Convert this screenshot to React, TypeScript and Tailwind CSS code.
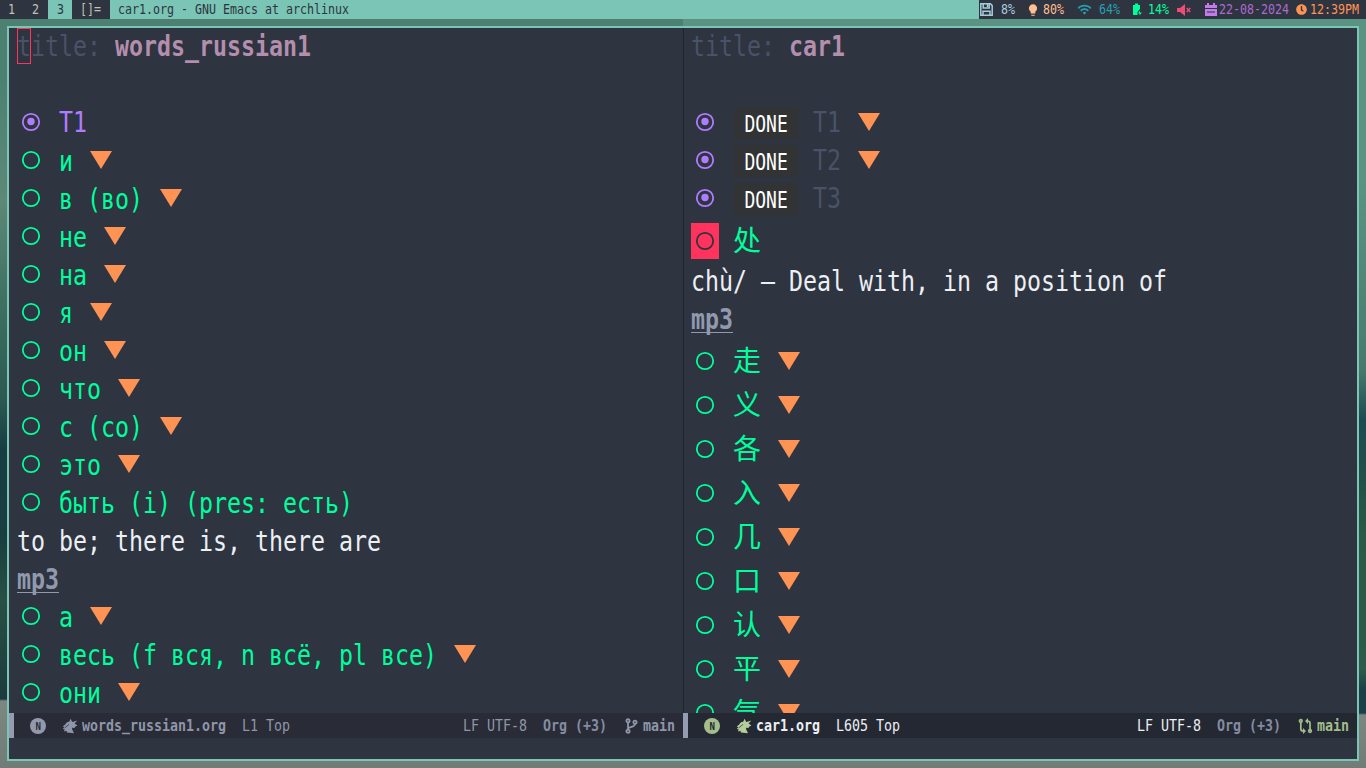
import React from "react";
import { FaClock } from "react-icons/fa";
import { MdLightbulb, MdWifi } from "react-icons/md";

type Size = "lg" | "md" | "sm";
const CELL: Record<Size, number> = { lg: 14, md: 8, sm: 7 };
const FONT: Record<Size, string> = {
  lg: "text-[28px]",
  md: "text-[16px]",
  sm: "text-[14px] pb-[2px]",
};

function Mono({ children, size = "lg", className = "" }: { children: string; size?: Size; className?: string }) {
  return (
    <span className={`block shrink-0 ${className}`} style={{ width: children.length * CELL[size] }}>
      <span className={`block w-max origin-left scale-x-[0.8306] whitespace-pre leading-none ${FONT[size]}`}>{children}</span>
    </span>
  );
}

function Bullet({ filled = false, className = "" }: { filled?: boolean; className?: string }) {
  return (
    <svg viewBox="0 0 28 20" className={`h-5 w-7 shrink-0 ${className}`} fill="none" stroke="currentColor" strokeWidth="1.8">
      <circle cx="14" cy="10" r="8.2" />
      {filled && <circle cx="14" cy="9.5" r="3.7" fill="currentColor" stroke="none" />}
    </svg>
  );
}

function Fold({ className = "" }: { className?: string }) {
  return (
    <svg viewBox="0 0 22 18" className={`ml-[17px] h-[18px] w-[22px] shrink-0 fill-[#ff9353] ${className}`}>
      <path d="M0 0H22L11 18Z" />
    </svg>
  );
}

function Row({ text, fold = true }: { text: string; fold?: boolean }) {
  return (
    <div className="flex h-[38px] shrink-0 items-center text-[#00ff9c]">
      <Bullet />
      <Mono className="ml-[14px] pt-[3px]">{text}</Mono>
      {fold && <Fold />}
    </div>
  );
}

function Done({ text, fold = false }: { text: string; fold?: boolean }) {
  return (
    <div className="flex h-[38px] shrink-0 items-center">
      <Bullet filled className="text-[#b07cff]" />
      <span className="ml-[15px] mt-[2px] flex h-8 w-16 items-center justify-center bg-[#323334] pt-[2px] text-white">
        <span className="-mx-4 block origin-center scale-x-[0.8] text-[22.5px] leading-none">DONE</span>
      </span>
      <Mono className="ml-[15px] pt-[2px] text-[#4a5267]">{text}</Mono>
      {fold && <Fold />}
    </div>
  );
}

function Han({ text }: { text: string }) {
  return (
    <div className="flex h-11 shrink-0 items-center text-[#00ff9c]">
      <Bullet className="mt-[4px]" />
      <span className="ml-[14px] w-7 font-['Noto_Sans_CJK_SC',sans-serif] text-[28px] leading-none">{text}</span>
      <Fold className="mt-[4px]" />
    </div>
  );
}

function Link({ text }: { text: string }) {
  return (
    <div className="flex h-[38px] shrink-0 items-center font-bold text-[#9099ae]">
      <Mono className="pt-[4px] underline decoration-1 underline-offset-[3px] [text-decoration-skip-ink:none]">{text}</Mono>
    </div>
  );
}

function Unicorn() {
  return (
    <svg viewBox="0 0 16 16" className="h-4 w-4 shrink-0 fill-current">
      <path d="M15.2 2.6 10.6 4 9.8 3.2 8.6.8 7.2 3.8C5 4 3.8 5.2 3 6.8L.6 8.6 2.4 9 .8 11 2.6 11.2 2 13.4 4.6 12.8 4.8 14.4 12 15.2 10.2 11.6 10 9.8 12.4 10 13.4 8.6 15.4 7.4 12.6 5.4Z" />
      <path d="M2.6 10 7 6.4" stroke="#292c36" strokeWidth=".7" />
    </svg>
  );
}

function Branch() {
  return (
    <svg viewBox="0 0 13 16" className="h-4 w-[13px] shrink-0" fill="none" stroke="currentColor" strokeWidth="1.8">
      <circle cx="3" cy="2.8" r="1.6" /><circle cx="3" cy="13.2" r="1.6" /><circle cx="10" cy="4.2" r="1.6" />
      <path d="M3 4.5v7M3 10.5c1-2 7-1 7-4.8" />
    </svg>
  );
}

function Compare() {
  return (
    <svg viewBox="0 0 15 16" className="h-4 w-[15px] shrink-0" fill="none" stroke="currentColor" strokeWidth="1.7">
      <circle cx="2.8" cy="3" r="1.3" /><circle cx="12" cy="13" r="1.3" />
      <path d="M2.8 4.5V11q0 2 2.7 2M12 11.5V5q0-2-2.7-2" />
      <path d="m5 10 3 3-3 3ZM10 0 7 3l3 3Z" fill="currentColor" stroke="none" />
    </svg>
  );
}

function ModeLine({ active, file, pos }: { active: boolean; file: string; pos: string }) {
  return (
    <div className={`flex h-[25px] shrink-0 items-center pr-2 ${active ? "bg-[#242832] text-[#eceff4]" : "bg-[#292c36] text-[#8f96aa]"}`}>
      <span className="h-full w-[5px] shrink-0 bg-[#959cb2]" />
      <span className={`ml-4 mt-px flex size-4 shrink-0 items-center justify-center rounded-full text-[11px] font-bold leading-none ${active ? "bg-[#a3be8c] text-[#242832]" : "bg-[#9299ae] text-[#292c36]"}`}>
        <span className="block scale-x-[0.83]">N</span>
      </span>
      <span className={`ml-4 mt-px flex ${active ? "text-[#b3cd9b]" : "text-[#8f96aa]"}`}><Unicorn /></span>
      <Mono size="md" className="ml-[4px] font-bold">{file}</Mono>
      <Mono size="md" className="ml-4">{pos}</Mono>
      <span className="grow" />
      <Mono size="md">LF UTF-8</Mono>
      <Mono size="md" className="ml-4 font-bold text-[#858ca2]">Org (+3)</Mono>
      <span className={`ml-[18px] flex items-center gap-[5px] ${active ? "text-[#a3be8c]" : "text-[#8f96aa]"}`}>
        {active ? <span className="-mx-px flex"><Compare /></span> : <Branch />}
        <Mono size="md" className="font-bold">main</Mono>
      </span>
    </div>
  );
}

const russianTop = ["и", "в (во)", "не", "на", "я", "он", "что", "с (со)", "это"];
const russianBottom = ["а", "весь (f вся, n всё, pl все)", "они"];
const hanzi = ["走", "义", "各", "入", "几", "口", "认", "平", "气"];

function StatusBar() {
  return (
    <header className="flex h-[19px] shrink-0 items-center bg-[#2e3440] text-[#c2c0b8]">
      <Mono size="sm" className="ml-2">1</Mono>
      <Mono size="sm" className="ml-[17px]">2</Mono>
      <span className="ml-[9px] flex h-full w-6 items-center justify-center bg-[#7ac5b5] text-[#2e3440]"><Mono size="sm">3</Mono></span>
      <Mono size="sm" className="ml-2">[]=</Mono>
      <span className="ml-[9px] flex h-full grow items-center bg-[#7ac5b5] pl-2 text-[#2e3440]"><Mono size="sm">car1.org - GNU Emacs at archlinux</Mono></span>
      <div className="flex h-full w-[387px] shrink-0 items-center">
        <svg viewBox="0 0 13 13" className="ml-[1px] size-[13px] shrink-0 text-[#a5cddd]" fill="none" stroke="currentColor" strokeWidth="1.5">
          <path d="M.8.8H10.4L12.2 2.6V12.2H.8ZM3.2 1v4h6V1M3 12V8.2h7V12" /><path d="M6.8 1h1.6v3H6.8z" fill="currentColor" stroke="none" />
        </svg>
        <Mono size="sm" className="ml-2 text-[#a5cddd]">8%</Mono>
        <MdLightbulb className="ml-[11px] size-[14px] shrink-0 text-[#ffbf91]" />
        <Mono size="sm" className="ml-[3px] text-[#ffbf91]">80%</Mono>
        <MdWifi className="ml-[13px] size-[15px] shrink-0 text-[#299fae]" />
        <Mono size="sm" className="ml-[7px] text-[#299fae]">64%</Mono>
        <svg viewBox="0 0 10 13" className="ml-[13px] h-[13px] w-[10px] shrink-0 fill-[#00ff9c]"><path d="M0 2h2V.5h3V2h2v4L4.5 9v3H0ZM7 7.5v2h2L6.5 12.5v-2H5Z" /></svg>
        <Mono size="sm" className="ml-[5px] text-[#00ff9c]">14%</Mono>
        <svg viewBox="0 0 14 12" className="ml-[8px] h-3 w-[14px] shrink-0" fill="#eb4d77"><path d="M0 4h3l5-4v12L3 8H0Z" /><path d="m9.7 4 3.6 4m0-4L9.7 8" stroke="#eb4d77" strokeWidth="1.3" /></svg>
        <svg viewBox="0 0 12 14" className="ml-[14px] h-[14px] w-3 shrink-0 fill-[#c27be9]"><path d="M2 0h2v2h4V0h2v2h2v3H0V2h2ZM0 6h12v7H0Z" /><path d="M2 8.5h8v1H2z" fill="#2e3440" /></svg>
        <Mono size="sm" className="ml-[2px] text-[#aa6bcd]">22-08-2024</Mono>
        <FaClock className="ml-[7px] size-[11px] shrink-0 text-[#ff9353]" />
        <Mono size="sm" className="ml-[3px] text-[#ff9353]">12:39PM</Mono>
      </div>
    </header>
  );
}

export default function App() {
  return (
    <div className="h-[768px] w-[1366px] overflow-hidden bg-[linear-gradient(180deg,#4c8172_0px,#4c8172_80px,#5e8878_200px,#3f7062_300px,#2c5952_400px,#173c42_450px,#1a3e40_540px,#285045_600px,#1c3a3e_699px,#7b8780_701px,#717c76_768px)] font-['DejaVu_Sans_Mono',monospace]">
      <div className="flex h-full flex-col bg-[linear-gradient(180deg,#5b9383_0px,#5b9383_180px,#4f8475_300px,#477a6d_370px,#1d4a50_420px,#235048_480px,#2a5a45_540px,#2d5a4a_670px,#1c4048_690px,#1c4048_713px,#7b8780_715px,#717c76_768px)] bg-right bg-no-repeat bg-size-[683px_100%]">
        <StatusBar />
        <main className="mx-[7px] my-[7px] flex min-h-0 grow flex-col border-2 border-[#7ac5b5] bg-[#2e3440]">
          <div className="flex min-h-0 grow">
            <section className="flex w-[674px] shrink-0 flex-col">
              <div className="flex min-h-0 grow flex-col overflow-hidden pl-2">
                <div className="flex h-[75px] shrink-0 items-start text-[#4a5267]">
                  <span className="h-9 w-[14px] border border-[#ff335c] pt-[4px]"><Mono className="-ml-px">t</Mono></span>
                  <Mono className="pt-[5px]">itle: </Mono>
                  <Mono className="pt-[5px] font-bold text-[#b48ead]">words_russian1</Mono>
                </div>
                <div className="flex h-[38px] shrink-0 items-center text-[#b07cff]"><Bullet filled /><Mono className="ml-[14px] pt-[2px]">T1</Mono></div>
                {russianTop.map((t) => <Row key={t} text={t} />)}
                <Row text="быть (i) (pres: есть)" fold={false} />
                <div className="flex h-[38px] shrink-0 items-center text-[#eceff4]"><Mono className="pt-[3px]">to be; there is, there are</Mono></div>
                <Link text="mp3" />
                {russianBottom.map((t) => <Row key={t} text={t} />)}
              </div>
              <ModeLine active={false} file="words_russian1.org" pos="L1 Top" />
            </section>
            <section className="flex min-w-0 grow flex-col">
              <div className="flex min-h-0 grow flex-col overflow-hidden border-l border-[#20242d] pl-[7px]">
                <div className="flex h-[75px] shrink-0 items-start text-[#4a5267]"><Mono className="pt-[5px]">title: </Mono><Mono className="pt-[5px] font-bold text-[#b48ead]">car1</Mono></div>
                <Done text="T1" fold />
                <Done text="T2" fold />
                <Done text="T3" />
                <div className="flex h-11 shrink-0 items-center text-[#00ff9c]">
                  <span className="mt-[4px] flex h-9 w-7 items-center bg-[#ff335c] text-[#2e3440]"><Bullet /></span>
                  <span className="ml-[14px] font-['Noto_Sans_CJK_SC',sans-serif] text-[28px] leading-none">处</span>
                </div>
                <div className="flex h-[38px] shrink-0 items-center text-[#eceff4]"><Mono className="pt-[3px]">chù/ – Deal with, in a position of</Mono></div>
                <Link text="mp3" />
                {hanzi.map((t) => <Han key={t} text={t} />)}
              </div>
              <ModeLine active file="car1.org" pos="L605 Top" />
            </section>
          </div>
          <div className="h-[21px] shrink-0" />
        </main>
      </div>
    </div>
  );
}
